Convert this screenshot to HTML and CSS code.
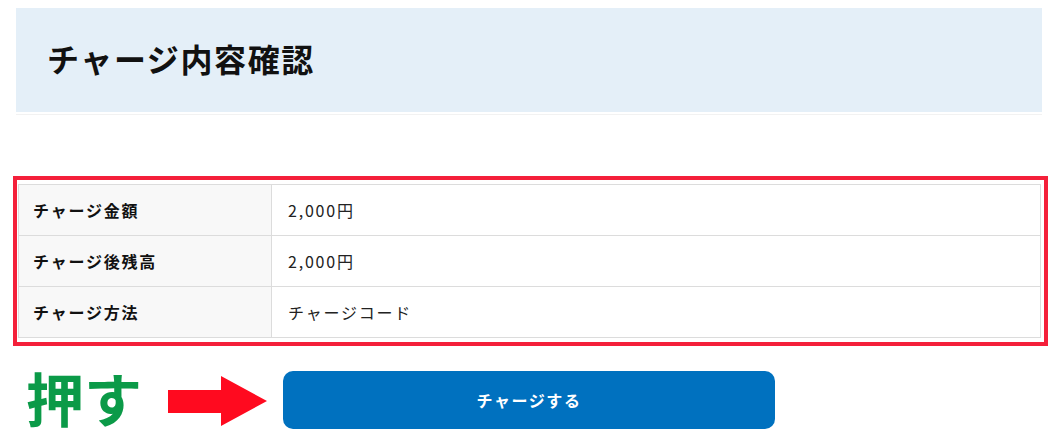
FILE: index.html
```html
<!DOCTYPE html>
<html lang="ja">
<head>
    <meta charset="UTF-8">
    <meta name="viewport" content="width=device-width, initial-scale=1.0">
    <title>チャージ内容確認</title>
    <link rel="stylesheet" href="styles.css">
</head>
<body>
    <div class="page">
        <div class="title-wrap">
            <h1 class="title">チャージ内容確認</h1>
        </div>
        <div class="mark-box">
            <table class="detail">
                <tr><th>チャージ金額</th><td>2,000円</td></tr>
                <tr><th>チャージ後残高</th><td>2,000円</td></tr>
                <tr><th>チャージ方法</th><td>チャージコード</td></tr>
            </table>
        </div>
        <div class="action-row">
            <div class="hint">
                <span class="hint-text">押す</span>
                <svg class="hint-arrow" width="100" height="52" viewBox="0 0 100 52">
                    <polygon points="0,14 53,14 53,0 99,25 53,50 53,37 0,37" fill="#ff0a1f"/>
                </svg>
            </div>
            <button class="charge-btn">チャージする</button>
        </div>
    </div>
</body>
</html>
```

FILE: styles.css
```css
body { margin: 0; background: #fff; font-family: "Noto Sans CJK JP", "Noto Sans", sans-serif; color: #111; }
.page { width: 1026px; margin-left: 16px; padding-top: 8px; }
.title-wrap { padding-bottom: 2px; border-bottom: 1px solid #f2f2f2; }
.title { margin: 0; height: 104px; box-sizing: border-box; padding: 0 0 4px 31px; display: flex; align-items: center; background: #e4eff8; font-size: 32px; font-weight: 700; letter-spacing: 1.6px; }
.mark-box { margin: 61px 0 0 -3px; width: 1023px; border: 4px solid #f4203a; padding: 4px 3px 4px 1px; }
.detail { width: 100%; border-collapse: collapse; border: 1px solid #dcdcdc; font-size: 16px; letter-spacing: 1.8px; }
.detail th, .detail td { height: 50px; padding: 0 16px; border-top: 1px solid #dcdcdc; text-align: left; }
.detail th { width: 222px; padding-left: 14px; background: #f8f8f8; font-weight: 700; border-right: 1px solid #dcdcdc; }
.detail td { font-weight: 400; color: #222; }
.action-row { display: grid; grid-template-columns: 1fr 492px 1fr; align-items: center; margin-top: 25px; }
.hint { display: flex; align-items: center; padding-left: 10px; gap: 26px; }
.hint-text { color: #0b9a48; font-size: 58px; font-weight: 700; line-height: 1; margin-top: -6px; }
.hint-arrow { display: block; margin-top: 4px; }
.charge-btn { height: 58px; border: none; border-radius: 10px; background: #0071bf; color: #fff; font-family: inherit; font-size: 16px; font-weight: 700; letter-spacing: 1.6px; }
```
